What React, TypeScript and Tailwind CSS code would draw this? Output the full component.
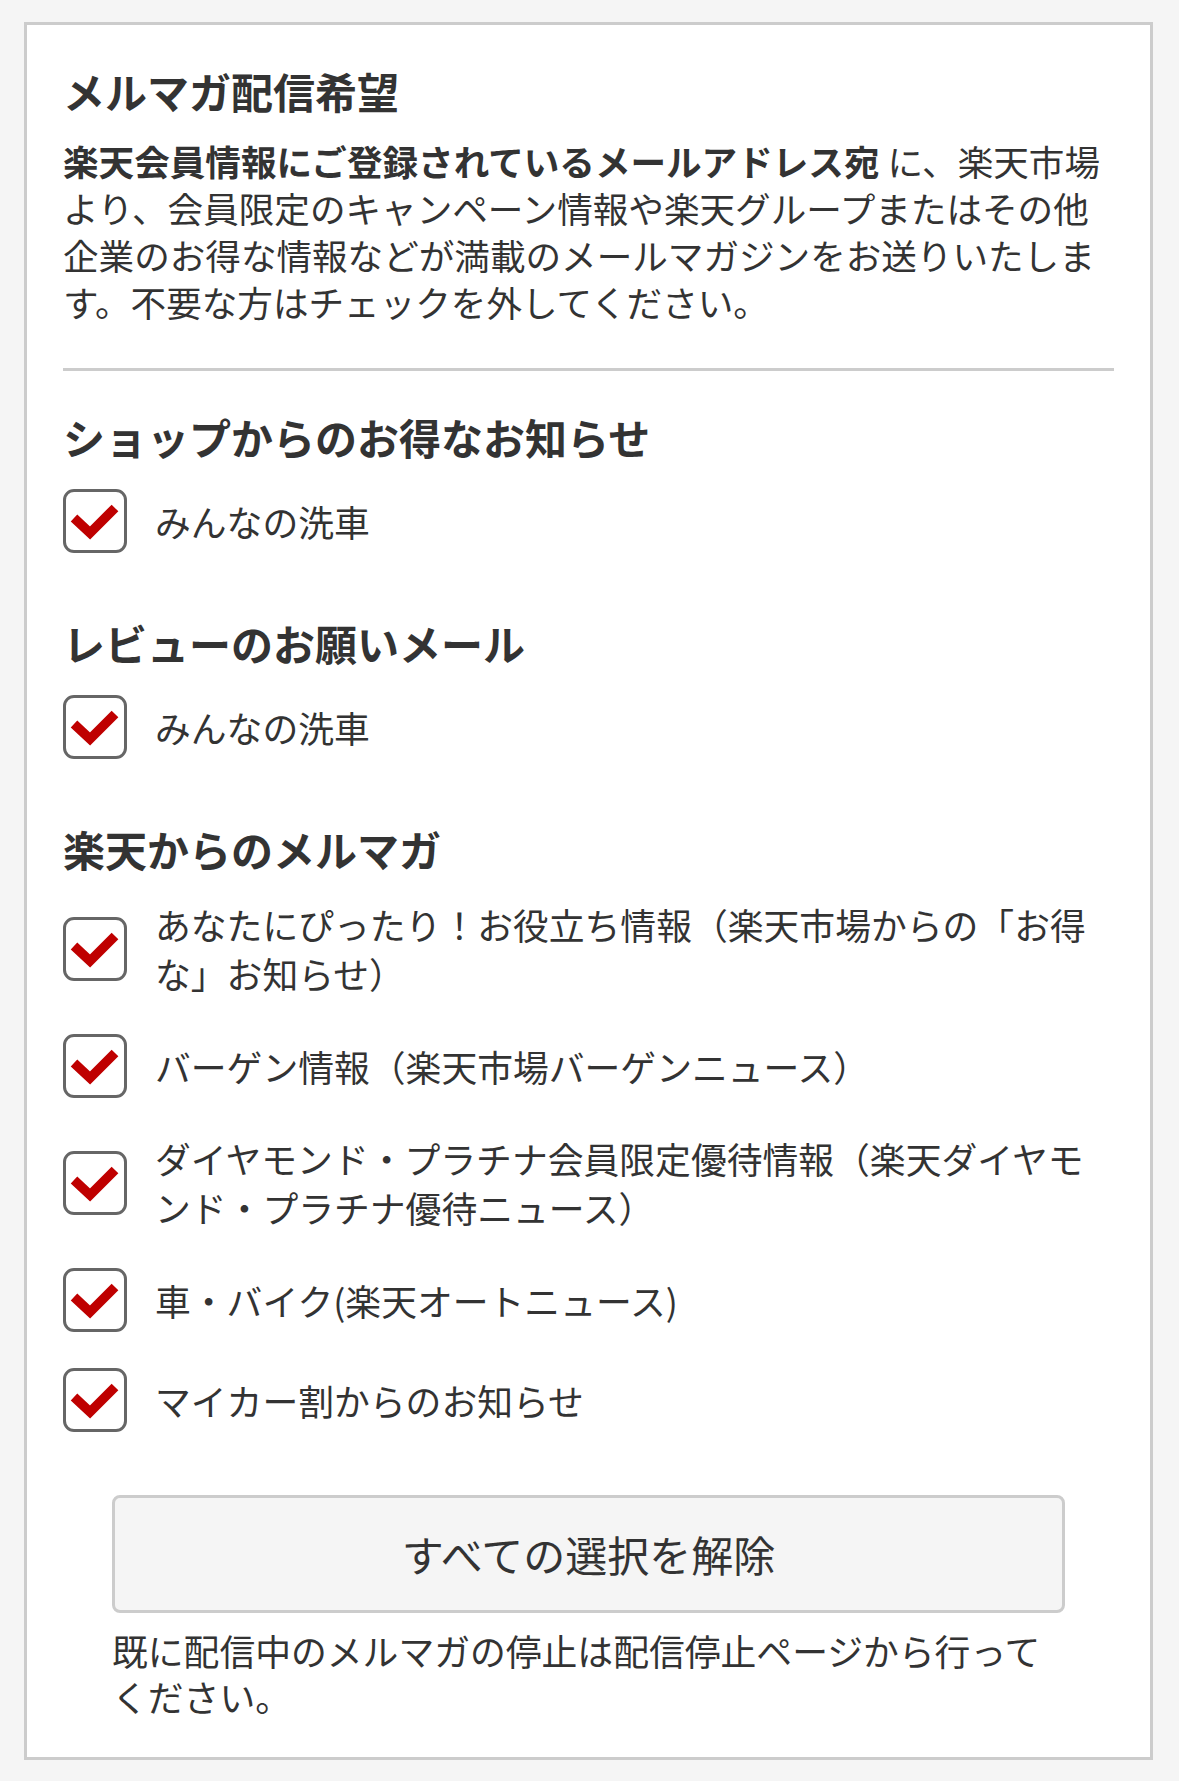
import React from "react";

function Check() {
  return (
    <span className="flex h-[64px] w-[64px] shrink-0 items-center justify-center rounded-[11px] border-[3px] border-[#666666] bg-white">
      <svg width="58" height="58" viewBox="0 0 58 58" aria-hidden="true">
        <polyline
          points="8,26 24,41 49,16"
          fill="none"
          stroke="#bf0000"
          strokeWidth="9.5"
          strokeLinejoin="miter"
          strokeLinecap="butt"
        />
      </svg>
    </span>
  );
}

function Row({ label }: { label: string }) {
  return (
    <label className="flex items-center gap-[28px]">
      <Check />
      <span className="max-w-[945px] text-[35.8px] leading-[49px]">{label}</span>
    </label>
  );
}

export default function App() {
  const rakuten = [
    "あなたにぴったり！お役立ち情報（楽天市場からの「お得な」お知らせ）",
    "バーゲン情報（楽天市場バーゲンニュース）",
    "ダイヤモンド・プラチナ会員限定優待情報（楽天ダイヤモンド・プラチナ優待ニュース）",
    "車・バイク(楽天オートニュース)",
    "マイカー割からのお知らせ",
  ];
  return (
    <div className="min-h-[1781px] bg-[#f5f5f5] pb-[18px] pl-[24px] pr-[26px] pt-[22px] font-['Noto_Sans_CJK_JP','Noto_Sans',sans-serif] text-[#333333]">
      <div className="border-[3px] border-[#cccccc] bg-white px-[36px] pb-[38px] pt-[37px]">
        <h2 className="text-[42px] font-bold leading-[58px]">メルマガ配信希望</h2>
        <p className="mt-[17px] text-[35.6px] leading-[47px]">
          <span className="font-bold">楽天会員情報にご登録されているメールアドレス宛 </span>に、楽天市場より、会員限定のキャンペーン情報や楽天グループまたはその他企業のお得な情報などが満載のメールマガジンをお送りいたします。不要な方はチェックを外してください。
        </p>
        <div className="mt-[43px] h-[3px] bg-[#cccccc]" />

        <h3 className="mt-[37px] text-[42px] font-bold leading-[58px]">ショップからのお得なお知らせ</h3>
        <div className="mt-[23px]">
          <Row label="みんなの洗車" />
        </div>

        <h3 className="mt-[61px] text-[42px] font-bold leading-[58px]">レビューのお願いメール</h3>
        <div className="mt-[23px]">
          <Row label="みんなの洗車" />
        </div>

        <h3 className="mt-[61px] text-[42px] font-bold leading-[58px]">楽天からのメルマガ</h3>
        <div className="mt-[22px] flex flex-col gap-[36px]">
          {rakuten.map((l) => (
            <Row key={l} label={l} />
          ))}
        </div>

        <div className="mx-[49px] mt-[63px]">
          <button
            type="button"
            className="flex h-[118px] w-full items-center justify-center rounded-[8px] border-[3px] border-[#cccccc] bg-[#f5f5f5] text-[42px] leading-[58px] text-[#333333]"
          >
            すべての選択を解除
          </button>
          <p className="mt-[14px] text-[35.8px] leading-[46px]">
            既に配信中のメルマガの停止は配信停止ページから行ってください。
          </p>
        </div>
      </div>
    </div>
  );
}
